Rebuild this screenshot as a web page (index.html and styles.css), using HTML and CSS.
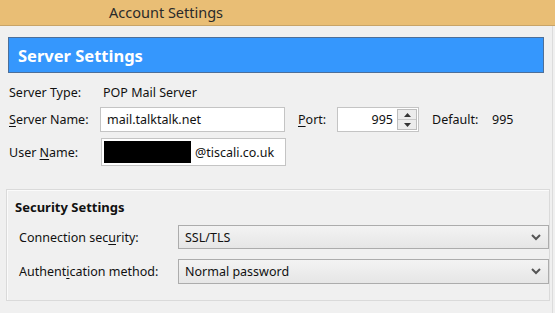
FILE: index.html
```html
<!DOCTYPE html>
<html>
<head>
<meta charset="utf-8">
<link rel="stylesheet" href="styles.css">
</head>
<body>
<div class="titlebar">Account Settings</div>
<div class="page">
  <div class="header">Server Settings</div>
  <div class="row row-type">
    <span class="label">Server Type:</span>
    <span class="value">POP Mail Server</span>
  </div>
  <div class="row row-name">
    <span class="label"><u>S</u>erver Name:</span>
    <div class="input server-input">mail.talktalk.net</div>
    <span class="port-label"><u>P</u>ort:</span>
    <div class="input port-input">
      <span class="port-value">995</span>
      <div class="spinner">
        <span class="spin-btn"><svg width="7" height="4" viewBox="0 0 7 4"><path d="M0 4 L3.5 0 L7 4 Z" fill="#333"/></svg></span>
        <span class="spin-btn"><svg width="7" height="4" viewBox="0 0 7 4"><path d="M0 0 L3.5 4 L7 0 Z" fill="#333"/></svg></span>
      </div>
    </div>
    <span class="default-label">Default:</span>
    <span class="default-value">995</span>
  </div>
  <div class="row row-user">
    <span class="label">User <u>N</u>ame:</span>
    <div class="input user-input">
      <span class="redact"></span>
      <span class="domain">@tiscali.co.uk</span>
    </div>
  </div>
  <div class="group">
    <div class="group-title">Security Settings</div>
    <div class="sel-row sel-first">
      <span class="sel-label">Connection sec<u>u</u>rity:</span>
      <div class="select">
        <span>SSL/TLS</span>
        <svg class="chev" width="10" height="7" viewBox="0 0 10 7"><path d="M1 1 L5 5 L9 1" fill="none" stroke="#555" stroke-width="2"/></svg>
      </div>
    </div>
    <div class="sel-row">
      <span class="sel-label">Authent<u>i</u>cation method:</span>
      <div class="select">
        <span>Normal password</span>
        <svg class="chev" width="10" height="7" viewBox="0 0 10 7"><path d="M1 1 L5 5 L9 1" fill="none" stroke="#555" stroke-width="2"/></svg>
      </div>
    </div>
  </div>
</div>
</body>
</html>
```
FILE: styles.css
```css
* { box-sizing: border-box; }
html, body { margin: 0; padding: 0; }
body {
  width: 555px;
  height: 313px;
  overflow: hidden;
  background: #f0f0f0;
  font-family: "Noto Sans", "Open Sans", sans-serif;
  font-size: 12.5px;
  color: #111;
}
u { text-decoration-thickness: 1px; text-underline-offset: 2px; }
.titlebar {
  height: 26px;
  background: #e9be75;
  border-bottom: 1px solid #c8a468;
  padding-left: 109px;
  font-size: 14.5px;
  line-height: 24px;
  color: #2a2a2a;
}
.page {
  padding: 11px 8px 0 8px;
  border-right: 1px solid #dcdcdc;
  margin-right: 2px;
  height: 287px;
}
.header {
  height: 36px;
  background: #3597fd;
  border: 1px solid #4d6f99;
  color: #fff;
  font-weight: bold;
  font-size: 16.5px;
  line-height: 35px;
  padding-left: 9px;
}
.row {
  display: flex;
  align-items: center;
}
.row-type { height: 18px; margin-top: 10px; }
.row-name { height: 25px; margin-top: 6px; }
.row-user { height: 28px; margin-top: 6px; }
.label { width: 92px; padding-left: 1px; }
.value { margin-left: 3px; }
.input {
  background: #fff;
  border: 1px solid #c4c4c4;
  height: 100%;
  display: flex;
  align-items: center;
}
.server-input { width: 185px; padding-left: 6px; }
.port-label { margin-left: 13px; width: 39px; }
.port-input { width: 82px; justify-content: flex-end; padding-right: 1px; }
.port-value { margin-right: 4px; }
.spinner {
  width: 20px;
  height: 21px;
  display: flex;
  flex-direction: column;
  border: 1px solid #bdbdbd;
  background: #ececec;
}
.spin-btn {
  flex: 1;
  display: flex;
  align-items: center;
  justify-content: center;
}
.spin-btn + .spin-btn { border-top: 1px solid #c9c9c9; }
.default-label { margin-left: 13px; width: 60px; }
.user-input { width: 185px; padding-left: 2px; margin-left: 1px; }
.redact { width: 87px; height: 22px; background: #000; }
.domain { margin-left: 4px; }
.group {
  margin: 23px -6px 0 -2px;
  height: 112px;
  border: 1px solid #dadada;
  box-shadow: inset 1px 1px 0 #fbfbfb;
  padding: 8px 0 0 8px;
}
.group-title {
  font-weight: bold;
  font-size: 13px;
  height: 18px;
  line-height: 18px;
}
.sel-row {
  display: flex;
  align-items: center;
  height: 25px;
  margin-top: 10px;
}
.sel-row.sel-first { height: 24px; margin-top: 9px; }
.sel-label { width: 163px; padding-left: 4px; }
.select {
  flex: 1;
  height: 100%;
  border: 1px solid #acacac;
  background: linear-gradient(#f3f3f3, #e6e6e6);
  display: flex;
  align-items: center;
  justify-content: space-between;
  padding: 0 6px 0 6px;
}
.chev { margin-right: 1px; }
```
